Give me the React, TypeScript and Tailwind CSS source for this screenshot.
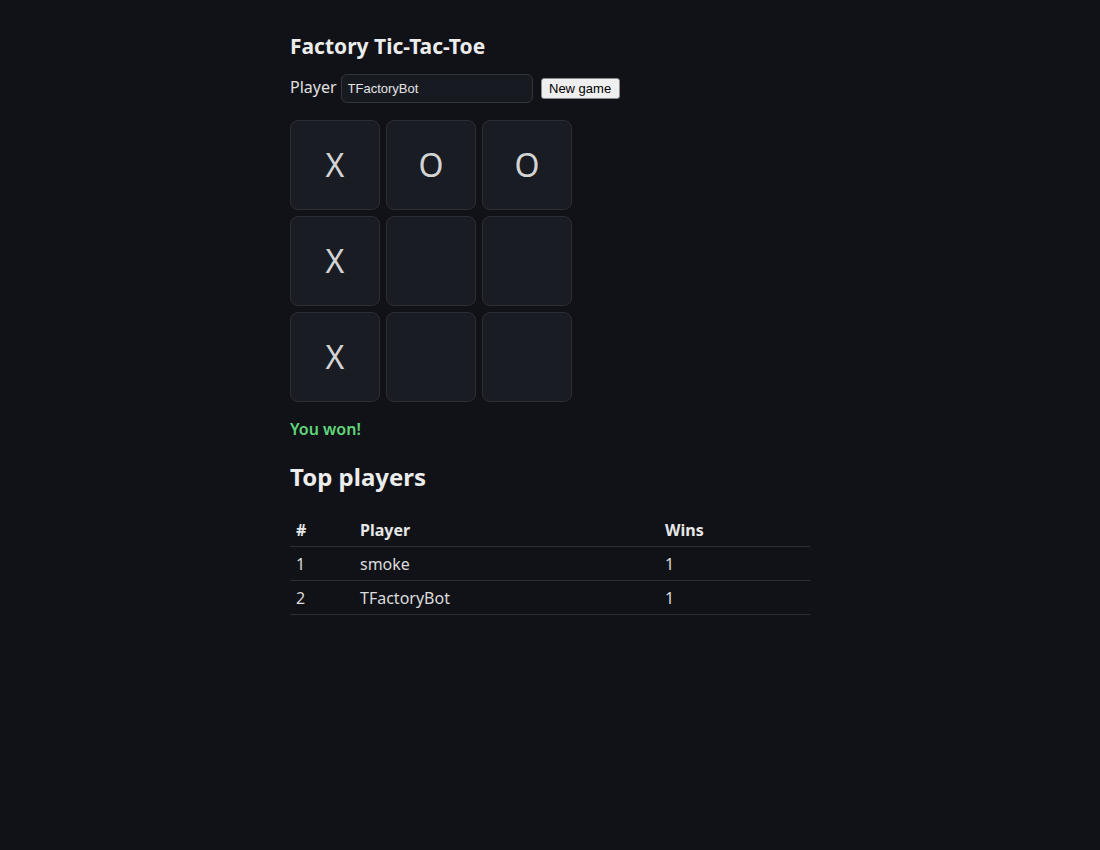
import React from "react";

const board = ["X", "O", "O", "X", "", "", "X", "", ""];

export default function App() {
  return (
    <div className="min-h-[850px] bg-[#111217] text-[#e6e6e6]" style={{ fontFamily: '"Noto Sans", sans-serif' }}>
      <div className="mx-auto w-[520px] pt-[33px]">
        <h1 className="text-[21px] font-bold leading-[26px] text-[#ececec]">Factory Tic-Tac-Toe</h1>
        <div className="mt-[15px] flex items-center">
          <span className="-mt-[3px] text-[16px] leading-[24px] text-[#e0e0e0]">Player</span>
          <input
            defaultValue="TFactoryBot"
            className="ml-[4px] h-[29px] w-[192px] rounded-[6px] border border-[#34363e] bg-[#181a21] px-[6px] text-[13px] text-[#e4e4e4] outline-none"
            style={{ fontFamily: '"Liberation Sans", Arial, sans-serif' }}
          />
          <button
            className="ml-[8px] h-[21px] w-[79px] rounded-[3px] border border-[#8a8a8a] bg-[#efefef] text-[13px] leading-[19px] text-black"
            style={{ fontFamily: '"Liberation Sans", Arial, sans-serif' }}
          >
            New game
          </button>
        </div>
        <div className="mt-[17px] grid w-[282px] grid-cols-[90px_90px_90px] gap-[6px]">
          {board.map((v, i) => (
            <div
              key={i}
              className="flex h-[90px] w-[90px] items-center justify-center rounded-[8px] border border-[#2c2e36] bg-[#1a1c24] text-[32px] text-[#d4d4d4]"
            >
              {v}
            </div>
          ))}
        </div>
        <div className="mt-[15px] text-[16px] font-semibold leading-[24px] text-[#5fd67a]">You won!</div>
        <h2 className="mt-[20px] text-[24px] font-bold leading-[32px] text-[#ececec]">Top players</h2>
        <table className="mt-[20px] w-[520px] border-collapse text-[16px]">
          <thead>
            <tr className="border-b border-[#2c2e35]">
              <th className="h-[33px] w-[64px] px-[6px] pt-[1px] text-left font-bold text-[#e6e6e6]">#</th>
              <th className="h-[33px] w-[305px] px-[6px] pt-[1px] text-left font-bold text-[#e6e6e6]">Player</th>
              <th className="h-[33px] px-[6px] pt-[1px] text-left font-bold text-[#e6e6e6]">Wins</th>
            </tr>
          </thead>
          <tbody>
            {[
              ["1", "smoke", "1"],
              ["2", "TFactoryBot", "1"],
            ].map((r) => (
              <tr key={r[0]} className="border-b border-[#2c2e35]">
                <td className="h-[34px] px-[6px] pt-[1px] text-[#dcdcdc]">{r[0]}</td>
                <td className="h-[34px] px-[6px] pt-[1px] text-[#dcdcdc]">{r[1]}</td>
                <td className="h-[34px] px-[6px] pt-[1px] text-[#dcdcdc]">{r[2]}</td>
              </tr>
            ))}
          </tbody>
        </table>
      </div>
    </div>
  );
}
